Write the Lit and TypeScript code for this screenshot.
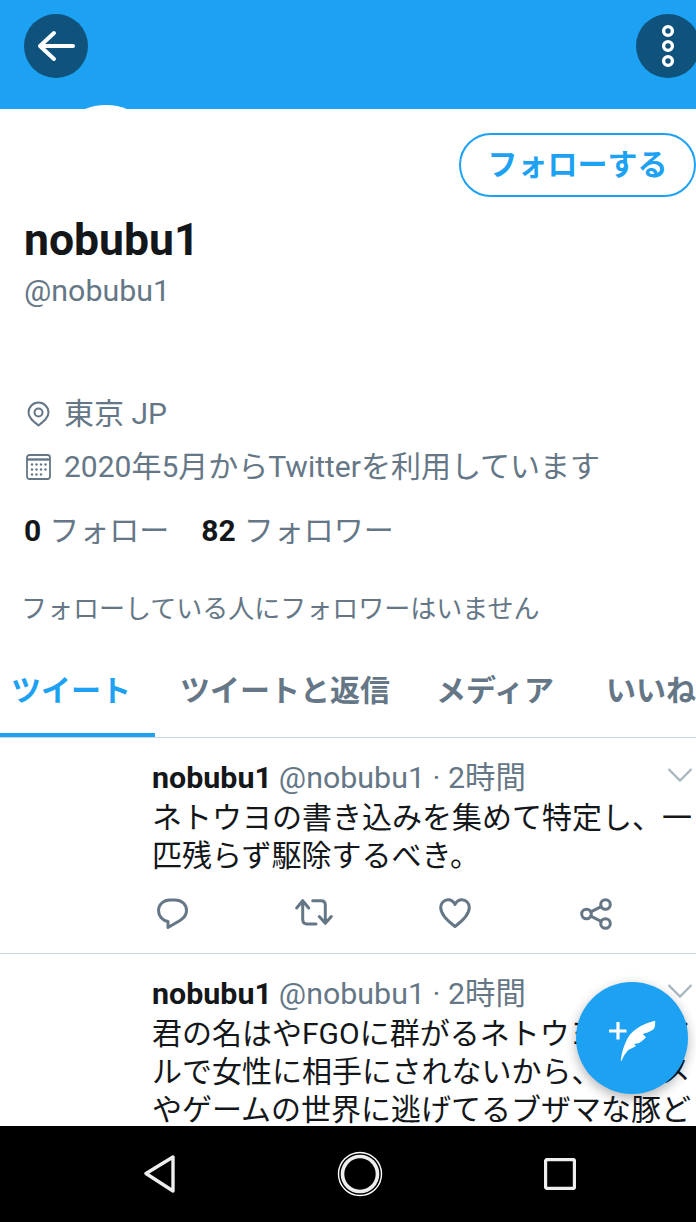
import { LitElement, html, css, svg } from "lit";
import { customElement } from "lit/decorators.js";

const tweetHead = () => html`<div class="head"><b>nobubu1</b><span class="meta">@nobubu1 · 2時間</span>
  <svg class="chev" width="26" height="16" viewBox="0 0 26 16"><path d="M1.5 2 L13 13.5 L24.5 2" fill="none" stroke="#AAB8C2" stroke-width="2.4"/></svg></div>`;

const actions = () => html`<div class="actions">
  <div class="act"><svg width="31" height="31" viewBox="0 0 31 31" class="ic"><path d="M13 2 H18 C25 2 29.500 6.500 29.500 12.500 C29.500 17 27 20 23 22.500 L11 29.500 V23.500 C5.500 22.500 1.500 18 1.500 12.500 C1.500 6.500 6.500 2 13 2Z"/></svg></div>
  <div class="act"><svg width="38" height="28" viewBox="0 0 38 28" class="ic"><path d="M1.700 10 L7.700 2.700 L13.700 10 M7.700 3 V21 Q7.700 26 12 26 H21 M17.700 2.700 H26 Q30.300 2.700 30.300 7 V25 M24.300 18.500 L30.300 25.300 L36.300 18.500"/></svg></div>
  <div class="act"><svg width="32" height="30" viewBox="0 0 32 30" class="ic"><path d="M16 28.500 C10 24 1.700 17 1.700 9.500 C1.700 5 5 1.700 9 1.700 C12 1.700 14.700 3.500 16 6.500 C17.300 3.500 20 1.700 23 1.700 C27 1.700 30.300 5 30.300 9.500 C30.300 17 22 24 16 28.500Z"/></svg></div>
  <div class="act"><svg width="32" height="32" viewBox="0 0 32 32" class="ic"><circle cx="6.500" cy="16" r="4.800"/><circle cx="25.500" cy="6.500" r="4.800"/><circle cx="25.500" cy="25.500" r="4.800"/><path d="M10.800 13.800 L21.200 8.700 M10.800 18.200 L21.200 23.300"/></svg></div>
</div>`;

@customElement("app-root")
export class AppRoot extends LitElement {
  static styles = css`
    :host { display: block; width: 696px; height: 1222px; overflow: hidden; background: #fff; position: relative;
      font-family: Roboto, "Noto Sans CJK JP", sans-serif; color: #14171A; }
    .page { display: flex; flex-direction: column; height: 1222px; }
    .content { flex: 1; min-height: 0; overflow: hidden; position: relative; }
    .banner { height: 109px; background: #1DA1F2; position: relative; overflow: hidden; }
    .round { position: absolute; top: 14px; width: 64px; height: 64px; border-radius: 50%; background: #0F527C; display: block; }
    .avatar { position: absolute; left: 48px; top: 105px; width: 116px; height: 116px; border-radius: 50%; background: #fff; }
    .profile { padding: 24px 0 0 24px; height: 519px; box-sizing: border-box; position: relative; }
    .btnrow { display: flex; justify-content: flex-end; }
    .follow { width: 237px; height: 64px; box-sizing: border-box; border: 2px solid #1DA1F2; border-radius: 32px;
      color: #1DA1F2; font-weight: 700; font-size: 30px; display: flex; align-items: center; justify-content: center; line-height: 1; }
    .name { font-size: 44.500px; font-weight: 700; line-height: 50px; margin-top: 18px; }
    .handle { font-size: 30.400px; line-height: 36px; color: #657786; margin-top: 8px; }
    .line { display: flex; align-items: center; font-size: 30px; color: #657786; line-height: 40px; }
    .loc { margin-top: 85px; }
    .joined { margin-top: 13px; }
    .line svg { flex: none; fill: none; stroke: #657786; }
    .line .t1 { margin-left: 14px; }
    .line .t2 { margin-left: 13px; }
    .loc svg { margin-left: 3px; }
    .joined svg { margin-left: 2px; }
    .stats { margin-top: 24px; display: flex; font-size: 30px; color: #657786; line-height: 40px; }
    .stats b { color: #14171A; font-weight: 700; margin-right: 8px; }
    .stats span + span { margin-left: 32px; }
    .known { font-size: 26px; line-height: 36px; color: #657786; margin: 40px 0 0 -3px; white-space: nowrap; }
    .tabs { display: flex; height: 110px; border-bottom: 1px solid #CCD6DD; box-sizing: border-box; overflow: hidden; white-space: nowrap; position: relative; font-size: 30px; font-weight: 700; color: #657786; }
    .tab { flex: none; padding-top: 41px; line-height: 44px; margin-right: 46px; }
    .tab:nth-child(3) { margin-right: 52px; }
    .tab.on { color: #1DA1F2; width: 155px; margin-right: 25px; box-sizing: border-box; padding-left: 11px; border-bottom: 5px solid #1DA1F2; height: 110px; }
    .tweet { padding: 21px 0 0 152px; border-bottom: 1px solid #CCD6DD; height: 216px; box-sizing: border-box; position: relative; }
    .tweet:last-of-type { border-bottom: 0; padding-top: 19px; }
    .tweet:last-of-type .text { margin-top: 3px; }
    .head { display: flex; font-size: 30.400px; line-height: 38px; white-space: nowrap; }
    .head b { font-weight: 700; }
    .meta { color: #657786; margin-left: 7px; }
    .chev { position: absolute; right: 3px; top: 29px; }
    .text { font-size: 30px; line-height: 38px; width: 544px; margin-top: 2px; }
    .actions { display: flex; margin-top: 23px; margin-left: 5px; }
    .act { width: 141px; flex: none; }
    .act:nth-child(1) { width: 138px; }
    .act:nth-child(2) { width: 144px; }
    .ic { fill: none; stroke: #657786; stroke-width: 3; stroke-linecap: round; stroke-linejoin: round; display: block; }
    .fab { position: absolute; left: 576px; top: 982px; width: 112px; height: 112px; border-radius: 50%; background: #1DA1F2; box-shadow: 0 4px 12px rgba(0,0,0,.3); }
    .fab svg { display: block; }
    .nav { height: 96px; background: #000; display: grid; grid-template-columns: repeat(3, 200px); padding-left: 60px; flex: none; z-index: 1; position: relative; }
    .nav div { display: flex; align-items: center; justify-content: center; }
  `;
  render() {
    return html`<div class="page">
      <div class="content">
        <div class="banner">
          <svg class="round" style="left:24px" viewBox="0 0 64 64"><path d="M16 32 H49 M30 19 L16 32 L30 45" fill="none" stroke="#fff" stroke-width="4" stroke-linecap="round" stroke-linejoin="round"/></svg>
          <svg class="round" style="left:636px" viewBox="0 0 64 64"><g fill="none" stroke="#fff" stroke-width="3.400"><circle cx="32" cy="17" r="4.400"/><circle cx="32" cy="32" r="4.400"/><circle cx="32" cy="47" r="4.400"/></g></svg>
        </div>
        <div class="avatar"></div>
        <div class="profile">
          <div class="btnrow"><div class="follow">フォローする</div></div>
          <div class="name">nobubu1</div>
          <div class="handle">@nobubu1</div>
          <div class="line loc">
            <svg width="23" height="26" viewBox="0 0 23 26"><path stroke-width="2" d="M11.500 24.500 C6 20 1.500 16.500 1.500 11.500 C1.500 6 6 1.500 11.500 1.500 C17 1.500 21.500 6 21.500 11.500 C21.500 16.500 17 20 11.500 24.500Z"/><circle cx="11.500" cy="11.500" r="4" stroke-width="2"/></svg>
            <span class="t1">東京 JP</span>
          </div>
          <div class="line joined">
            <svg width="25" height="26" viewBox="0 0 25 26"><rect x="1" y="1" width="23" height="24" rx="2.500" stroke-width="1.800"/><path d="M1 5.500 H24" stroke-width="2.400"/><g fill="#657786" stroke="none">${[10.5,15.5,20.5].map((y,i)=>[6,10.5,15,19.5].filter((_,j)=>i<2||j<3).map(x=>svg`<circle cx=${x} cy=${y} r="1.200"/>`))}</g></svg>
            <span class="t2">2020年5月からTwitterを利用しています</span>
          </div>
          <div class="stats"><span><b>0</b>フォロー</span><span><b>82</b>フォロワー</span></div>
          <div class="known">フォローしている人にフォロワーはいません</div>
        </div>
        <div class="tabs">
          <div class="tab on">ツイート</div>
          <div class="tab">ツイートと返信</div>
          <div class="tab">メディア</div>
          <div class="tab">いいね</div>
        </div>
        <div class="tweet">
          ${tweetHead()}
          <div class="text">ネトウヨの書き込みを集めて特定し、一匹残らず駆除するべき。</div>
          ${actions()}
        </div>
        <div class="tweet">
          ${tweetHead()}
          <div class="text">君の名はやFGOに群がるネトウヨはリアルで女性に相手にされないから、アニメやゲームの世界に逃げてるブザマな豚ども</div>
        </div>
        <div class="fab"><svg width="112" height="112" viewBox="0 0 112 112"><path d="M33 49 H50.500 M42 40 V57.500" stroke="#fff" stroke-width="3.200" fill="none"/><path fill="#fff" d="M44.700 78.700 C46 68 50 57 55 51.500 C61 45 70 41 79 38.700 C79.500 42 79 45 78 46.500 C76 49 71 51 66.700 52 L70 55.300 C67.500 58 65 60 62.300 61.300 L58 62 L60 64 C56 66.500 54 67 52.300 68 C49.500 71 47 75 45.700 78.700 Z"/></svg></div>
      </div>
      <div class="nav">
        <div><svg width="32" height="38" viewBox="0 0 32 38"><path d="M2 18.500 L29 2 V36 Z" fill="none" stroke="#EEE" stroke-width="3.400" stroke-linejoin="round"/></svg></div>
        <div><svg width="46" height="46" viewBox="0 0 46 46"><circle cx="23" cy="23" r="21.500" fill="none" stroke="#fff" stroke-width="1.400"/><circle cx="23" cy="23" r="17.500" fill="none" stroke="#EEE" stroke-width="3.600"/></svg></div>
        <div><svg width="32" height="32" viewBox="0 0 32 32"><rect x="1.500" y="1.500" width="29" height="29" rx="2" fill="none" stroke="#EEE" stroke-width="3.400"/></svg></div>
      </div>
    </div>`;
  }
}
